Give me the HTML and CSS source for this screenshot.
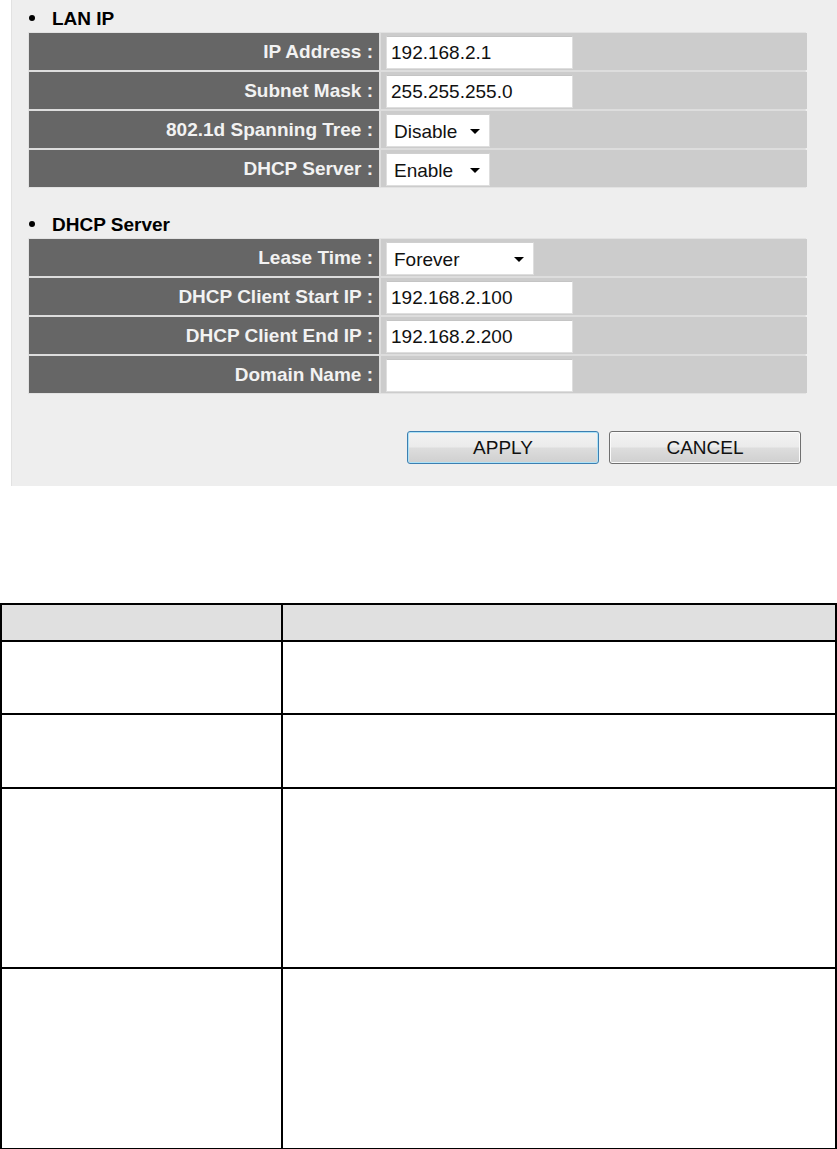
FILE: index.html
```html
<!DOCTYPE html>
<html lang="en">
<head>
    <meta charset="utf-8">
    <title>LAN</title>
    <link rel="stylesheet" href="styles.css">
</head>
<body>

    <div class="panel">
        <h3 class="afsnit"><span class="prik"></span>LAN IP</h3>
        <div class="tabel">
            <div class="navn">IP Address :</div>
            <div class="felt"><input class="tekst" type="text" value="192.168.2.1"></div>
            <div class="navn">Subnet Mask :</div>
            <div class="felt"><input class="tekst" type="text" value="255.255.255.0"></div>
            <div class="navn">802.1d Spanning Tree :</div>
            <div class="felt"><span class="vaelg kort">Disable</span></div>
            <div class="navn">DHCP Server :</div>
            <div class="felt"><span class="vaelg kort">Enable</span></div>
        </div>

        <h3 class="afsnit anden"><span class="prik"></span>DHCP Server</h3>
        <div class="tabel">
            <div class="navn">Lease Time :</div>
            <div class="felt"><span class="vaelg lang">Forever</span></div>
            <div class="navn">DHCP Client Start IP :</div>
            <div class="felt"><input class="tekst" type="text" value="192.168.2.100"></div>
            <div class="navn">DHCP Client End IP :</div>
            <div class="felt"><input class="tekst" type="text" value="192.168.2.200"></div>
            <div class="navn">Domain Name :</div>
            <div class="felt"><input class="tekst" type="text" value=""></div>
        </div>

        <div class="knapper">
            <button class="knap valgt">APPLY</button>
            <button class="knap">CANCEL</button>
        </div>
    </div>

    <table class="oversigt">
        <tr class="hoved"><td class="venstre"></td><td></td></tr>
        <tr class="r1"><td></td><td></td></tr>
        <tr class="r2"><td></td><td></td></tr>
        <tr class="r3"><td></td><td></td></tr>
        <tr class="r4"><td></td><td></td></tr>
    </table>

</body>
</html>
```

FILE: styles.css
```css
* {
    box-sizing: border-box;
    font-family: "Liberation Sans", Arial, sans-serif;
}

body {
    margin: 0;
    background-color: #ffffff;
}

.panel {
    margin-left: 11px;
    width: 826px;
    height: 486px;
    padding-left: 16px;
    background-color: #eeeeee;
    border-left: 1px solid #e2e2e2;
}

.afsnit {
    margin: 0;
    height: 32px;
    padding-top: 8px;
    font-size: 19px;
    line-height: 22px;
    font-weight: bold;
    color: #000;
}

.afsnit.anden {
    margin-top: 18px;
}

.prik {
    display: inline-block;
    width: 6px;
    height: 6px;
    margin: 0 17px 3px 1px;
    border-radius: 50%;
    background-color: #000;
    vertical-align: middle;
}

.tabel {
    display: grid;
    grid-template-columns: 350px 426px;
    grid-auto-rows: 37px;
    gap: 2px;
    width: 778px;
    background-color: #dddddd;
    border: 1px solid #e2e2e2;
}

.navn {
    background-color: #666666;
    color: #f2f2f2;
    font-size: 19px;
    font-weight: bold;
    text-align: right;
    padding-right: 6px;
    line-height: 37px;
}

.felt {
    background-color: #cccccc;
    padding: 3px 0 0 5px;
}

.tekst {
    display: block;
    width: 187px;
    height: 33px;
    margin: 0;
    padding: 0 4px;
    font-size: 19px;
    color: #111;
    background-color: #fff;
    border: 1px solid #dedede;
    border-top-color: #c4c4c4;
    border-radius: 1px;
}

.vaelg {
    position: relative;
    display: block;
    height: 33px;
    padding-left: 7px;
    font-size: 19px;
    line-height: 33px;
    color: #111;
    background-color: #fff;
    border: 1px solid #dedede;
    border-top-color: #cfcfcf;
}

.vaelg::after {
    content: "";
    position: absolute;
    right: 9px;
    top: 14px;
    border-left: 5px solid transparent;
    border-right: 5px solid transparent;
    border-top: 5px solid #000;
}

.kort {
    width: 104px;
}

.lang {
    width: 148px;
}

.knapper {
    display: flex;
    justify-content: flex-end;
    gap: 10px;
    width: 778px;
    padding-right: 5px;
    margin-top: 37px;
}

.knap {
    width: 192px;
    height: 33px;
    font-size: 19px;
    color: #111;
    border: 1px solid #707070;
    border-radius: 3px;
    background: linear-gradient(#f3f3f3 0%, #ebebeb 48%, #dddddd 52%, #cfcfcf 100%);
    box-shadow: inset 0 0 0 1px #fbfbfb;
    padding: 0;
}

.valgt {
    border-color: #3c7fb1;
    box-shadow: inset 0 0 0 1px #aee2f7;
}

.oversigt {
    margin-top: 117px;
    width: 837px;
    border-collapse: collapse;
    border: 2px solid #000;
}

.oversigt td {
    border: 2px solid #000;
    padding: 0;
}

.venstre {
    width: 281px;
}

.hoved td {
    background-color: #e0e0e0;
}

.hoved { height: 37px; }
.r1 { height: 73px; }
.r2 { height: 74px; }
.r3 { height: 180px; }
.r4 { height: 181px; }
```
